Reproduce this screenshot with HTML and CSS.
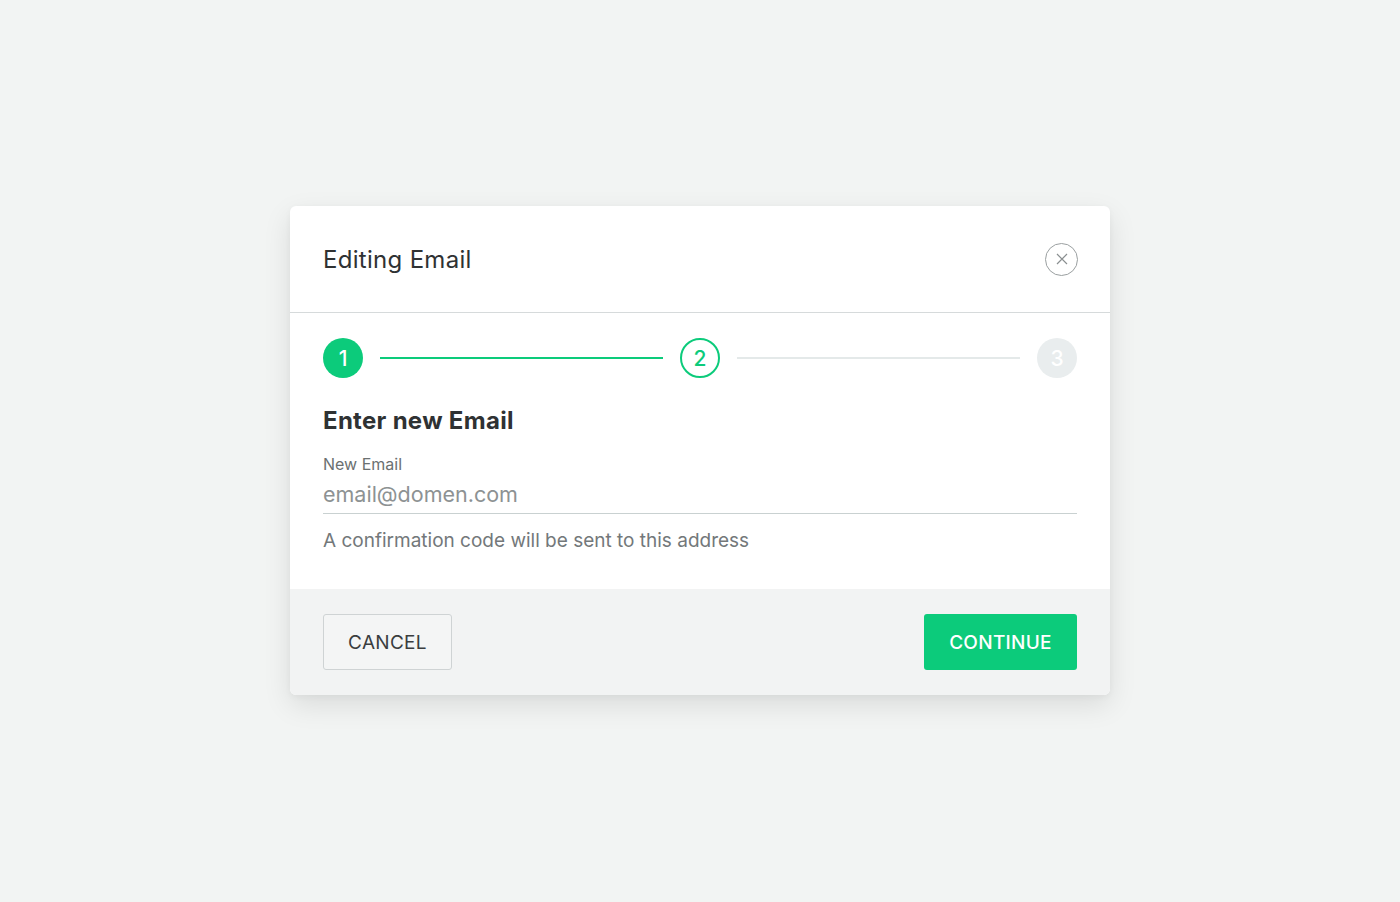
FILE: index.html
```html
<!DOCTYPE html>
<html lang="en">
<head>
    <meta charset="UTF-8">
    <meta name="viewport" content="width=device-width, initial-scale=1.0">
    <title>Editing Email</title>
    <link rel="stylesheet" href="styles.css">
</head>
<body>
    <!-- Edit Email Modal -->
    <div class="modal">
        <div class="modal-header">
            <h1>Editing Email</h1>
            <button class="close-btn" aria-label="Close">
                <svg width="14" height="14" viewBox="0 0 14 14">
                    <path d="M2 2 L12 12 M12 2 L2 12" stroke="#8a8f90" stroke-width="1.2" fill="none"/>
                </svg>
            </button>
        </div>

        <div class="modal-body">
            <div class="steps">
                <div class="step done">1</div>
                <div class="step-line active"></div>
                <div class="step current">2</div>
                <div class="step-line"></div>
                <div class="step">3</div>
            </div>

            <h2>Enter new Email</h2>

            <div class="field">
                <label for="newEmail">New Email</label>
                <input type="text" id="newEmail" placeholder="email@domen.com">
            </div>
            <p class="hint">A confirmation code will be sent to this address</p>
        </div>

        <div class="modal-footer">
            <button class="btn btn-cancel">Cancel</button>
            <button class="btn btn-continue">Continue</button>
        </div>
    </div>
</body>
</html>
```

FILE: styles.css
```css
body {
    margin: 0;
    height: 100vh;
    background-color: #f2f4f3;
    font-family: Inter, "Noto Sans", Arial, sans-serif;
    display: flex;
    align-items: center;
    justify-content: center;
}

/* Modal */
.modal {
    width: 820px;
    margin-top: -1px;
    background-color: #fff;
    border-radius: 6px;
    box-shadow: 0 10px 28px rgba(0, 0, 0, 0.1), 0 2px 6px rgba(0, 0, 0, 0.04);
    overflow: hidden;
}

.modal-header {
    height: 106px;
    padding: 0 32px 0 33px;
    display: flex;
    align-items: center;
    justify-content: space-between;
    border-bottom: 1px solid #d6dadb;
}

.modal-header h1 {
    margin: 0;
    font-size: 24px;
    font-weight: 400;
    letter-spacing: 0.3px;
    color: #2f3233;
}

.close-btn {
    width: 33px;
    height: 33px;
    border: 1px solid #9a9fa0;
    border-radius: 50%;
    background: none;
    padding: 0;
    display: flex;
    align-items: center;
    justify-content: center;
    cursor: pointer;
}

.modal-body {
    padding: 25px 33px 36px;
}

/* Stepper */
.steps {
    display: flex;
    align-items: center;
    gap: 17px;
}

.step {
    width: 40px;
    height: 40px;
    box-sizing: border-box;
    border-radius: 50%;
    flex-shrink: 0;
    display: flex;
    align-items: center;
    justify-content: center;
    font-size: 21px;
    font-weight: 500;
    background-color: #e9edee;
    color: #fff;
}

.step.done {
    background-color: #0ccb7b;
    color: #fff;
}

.step.current {
    background-color: #fff;
    border: 2px solid #0ccb7b;
    color: #0ccb7b;
}

.step-line {
    flex: 1;
    height: 2px;
    background-color: #e4e9e9;
}

.step-line.active {
    background-color: #0ccb7b;
}

.modal-body h2 {
    margin: 28px 0 18px;
    font-size: 24px;
    line-height: 30px;
    font-weight: 700;
    letter-spacing: 0.3px;
    color: #2f3233;
}

.field label {
    display: block;
    font-size: 16px;
    line-height: 20px;
    color: #6b7071;
}

.field input {
    display: block;
    width: 100%;
    box-sizing: border-box;
    margin-top: 6px;
    padding: 0 0 5px;
    border: none;
    border-bottom: 1px solid #c9d1d1;
    font-family: inherit;
    font-size: 21.5px;
    line-height: 28px;
    color: #2f3233;
    outline: none;
    background: none;
}

.field input::placeholder {
    color: #8d9293;
}

.hint {
    margin: 15px 0 0;
    font-size: 19px;
    line-height: 24px;
    color: #73787a;
}

/* Footer */
.modal-footer {
    background-color: #f2f3f3;
    padding: 25px 33px;
    display: flex;
    justify-content: space-between;
}

.btn {
    height: 56px;
    padding: 0 24px;
    border-radius: 3px;
    font-family: inherit;
    font-size: 19px;
    text-transform: uppercase;
    letter-spacing: 0.3px;
    cursor: pointer;
}

.btn-cancel {
    width: 129px;
    background-color: #f4f5f5;
    border: 1px solid #cfd3d4;
    color: #3a3d3e;
}

.btn-continue {
    width: 153px;
    background-color: #0ccb7b;
    border: none;
    color: #fff;
    font-weight: 500;
}

.btn-continue:hover {
    background-color: #0ab870;
}
```
